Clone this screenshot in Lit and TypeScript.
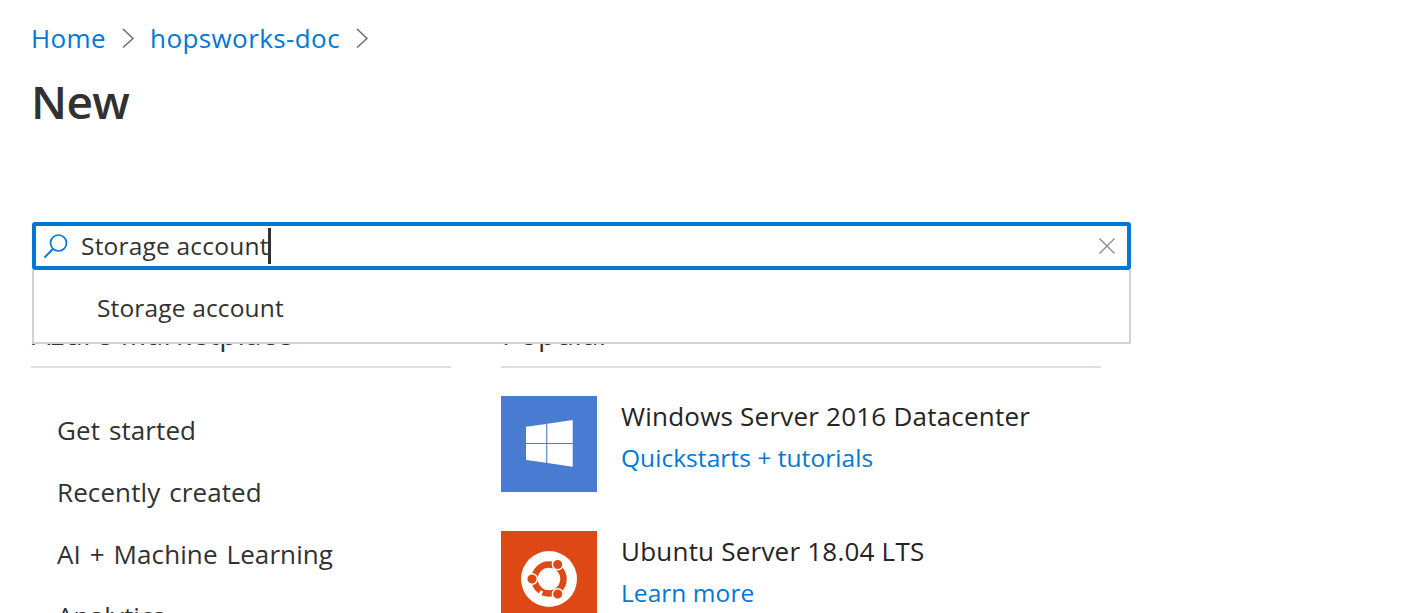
import { LitElement, html, css } from "lit";
import { customElement } from "lit/decorators.js";

const chevron = html`<svg class="chev" viewBox="0 0 12 20" width="12" height="20"><path d="M1 1l10 9.500L1 19.500" fill="none" stroke="#6b6b6b" stroke-width="1.500"/></svg>`;

@customElement("app-root")
export class AppRoot extends LitElement {
  static styles = css`
    :host { display: block; height: 613px; overflow: hidden; background: #fff; font-family: "Open Sans", "Noto Sans", sans-serif; color: #323130; }
    * { box-sizing: border-box; }
    .page { padding: 0 0 0 31px; }
    .crumbs { display: flex; align-items: center; height: 38px; margin: 19px 0 0 0; gap: 16px; font-size: 26px; color: #0078d4; }
    .crumbs span { letter-spacing: 0.4px; }
    .chev { display: block; }
    h1 { margin: 13px 0 0 0; font-size: 46px; line-height: 62px; font-weight: 600; letter-spacing: -0.6px; color: #323130; }
    .searchwrap { position: relative; width: 1099px; margin: 90px 0 0 1px; }
    .search { display: flex; align-items: center; height: 48px; border: 4px solid #0078d4; border-radius: 3px; padding: 0 12px 0 7px; background: #fff; }
    .glass { flex: none; margin-right: 12px; }
    .value { font-size: 24.5px; letter-spacing: 0.2px; line-height: 32px; color: #323130; }
    .caret { width: 3px; height: 36px; background: #323130; margin-left: -1px; }
    .spacer { flex: 1; }
    .menu { position: absolute; top: 48px; left: 0; right: 0; height: 74px; background: #fff; border: 2px solid #d2d2d2; border-top: none; padding: 22px 0 0 63px; font-size: 24.5px; letter-spacing: 0.15px; line-height: 32px; z-index: 2; }
    .cols { display: flex; margin-top: 46px; gap: 50px; }
    .left { width: 420px; }
    .right { width: 600px; }
    h2 { margin: 0; height: 52px; padding: 0 0 0 1px; font-size: 29px; line-height: 36px; font-weight: 400; border-bottom: 2px solid #dbe0e6; letter-spacing: 0.5px; }
    .nav { list-style: none; margin: 44px 0 0 26px; padding: 0; font-size: 26px; letter-spacing: 0.1px; word-spacing: 2px; }
    .nav li { height: 62px; line-height: 36px; }
    .item { display: flex; gap: 24px; height: 96px; margin-bottom: 39px; }
    h2 + .item { margin-top: 28px; }
    .tile { width: 96px; height: 96px; flex: none; display: block; }
    .name { font-size: 26px; letter-spacing: 0.22px; line-height: 36px; margin-top: 2px; color: #252423; }
    .link { font-size: 24.5px; letter-spacing: 0.05px; line-height: 36px; margin-top: 6px; color: #0078d4; }
  `;

  render() {
    return html`<div class="page">
      <nav class="crumbs"><span>Home</span>${chevron}<span>hopsworks-doc</span>${chevron}</nav>
      <h1>New</h1>
      <div class="searchwrap">
        <div class="search">
          <svg class="glass" width="26" height="26" viewBox="0 0 26 26"><circle cx="15.500" cy="10" r="8" fill="none" stroke="#0078d4" stroke-width="1.700"/><path d="M10 16L1.500 24.500" stroke="#0078d4" stroke-width="1.900" fill="none"/></svg>
          <span class="value">Storage account</span><span class="caret"></span>
          <span class="spacer"></span>
          <svg width="16" height="16" viewBox="0 0 16 16"><path d="M0.500 0.500l15 15M15.500 0.500l-15 15" stroke="#8a8a8a" stroke-width="1.300" fill="none"/></svg>
        </div>
        <div class="menu">Storage account</div>
      </div>
      <div class="cols">
        <section class="left">
          <h2>Azure Marketplace</h2>
          <ul class="nav">
            <li>Get started</li>
            <li>Recently created</li>
            <li>AI + Machine Learning</li>
            <li>Analytics</li>
          </ul>
        </section>
        <section class="right">
          <h2>Popular</h2>
          <div class="item">
            <svg class="tile" viewBox="0 0 96 96"><rect width="96" height="96" fill="#4a7bd2"/><path d="M25 30.700L45.200 28V46.900H25zM46.300 27.700L71.700 24V46.900H46.300zM25 48H45.200V66.800L25 64zM46.300 48H71.700V70.700L46.300 67z" fill="#fff"/></svg>
            <div><div class="name">Windows Server 2016 Datacenter</div><div class="link">Quickstarts + tutorials</div></div>
          </div>
          <div class="item">
            <svg class="tile" viewBox="0 0 96 96"><rect width="96" height="96" fill="#de4814"/><circle cx="48" cy="48" r="28" fill="#fff"/><circle cx="48" cy="48" r="14.500" fill="none" stroke="#de4814" stroke-width="6.500"/><g stroke="#fff" stroke-width="3"><path d="M55 36l6-10M41 60l-6 10M34 48H22"/></g><circle cx="31" cy="48" r="5.300" fill="#de4814" stroke="#fff" stroke-width="1.500"/><circle cx="56.700" cy="33.500" r="5.300" fill="#de4814" stroke="#fff" stroke-width="1.500"/><circle cx="56.700" cy="63" r="5.300" fill="#de4814" stroke="#fff" stroke-width="1.500"/></svg>
            <div><div class="name">Ubuntu Server 18.04 LTS</div><div class="link">Learn more</div></div>
          </div>
        </section>
      </div>
    </div>`;
  }
}
